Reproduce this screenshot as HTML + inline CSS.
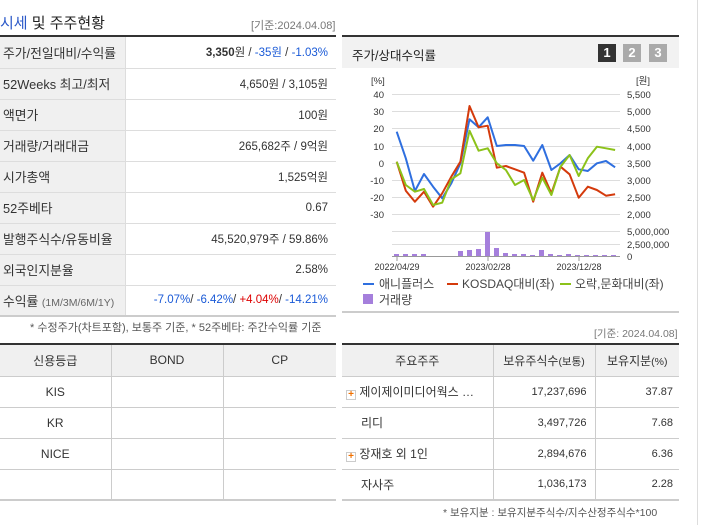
<!DOCTYPE html>
<html><head><meta charset="utf-8"><style>
*{margin:0;padding:0;box-sizing:border-box}
body{width:702px;height:525px;background:#fff;font-family:"Liberation Sans","Noto Sans CJK KR",sans-serif;font-size:12px;color:#333;position:relative;overflow:hidden}
.a{position:absolute}
table{border-collapse:collapse;position:absolute}
td{height:31px;border-bottom:1px solid #ddd;font-size:12px}
.lt td.l{background:#f0f0f0;width:125px;padding-left:3px;border-right:1px solid #ddd;font-size:12.8px}
.lt td.r{text-align:right;padding-right:8px;font-size:11.5px}
.b{color:#1a5ad7}.rd{color:#d00}
.ct td,.ct th{border-bottom:1px solid #ccc;border-right:1px solid #ccc;text-align:center;font-weight:normal;font-size:12px;height:31px}
.ct th{background:#f0f0f0}
.ct td:last-child,.ct th:last-child{border-right:none}
</style></head><body>
<div class="a" style="left:0;top:12px;font-size:15px;color:#222"><span style="color:#2a58c8">시세</span> 및 주주현황</div>
<div class="a" style="left:251px;top:17px;font-size:11px;color:#777">[기준:2024.04.08]</div>
<div class="a" style="left:0;top:35px;width:336px;height:2px;background:#333"></div>
<table class="lt" style="left:0;top:37px;width:336px">
<tr><td class="l">주가/전일대비/수익률</td><td class="r"><b>3,350</b>원 / <span class="b">-35원</span> / <span class="b">-1.03%</span></td></tr>
<tr><td class="l">52Weeks 최고/최저</td><td class="r">4,650원 / 3,105원</td></tr>
<tr><td class="l">액면가</td><td class="r">100원</td></tr>
<tr><td class="l">거래량/거래대금</td><td class="r">265,682주 / 9억원</td></tr>
<tr><td class="l">시가총액</td><td class="r">1,525억원</td></tr>
<tr><td class="l">52주베타</td><td class="r">0.67</td></tr>
<tr><td class="l">발행주식수/유동비율</td><td class="r">45,520,979주 / 59.86%</td></tr>
<tr><td class="l">외국인지분율</td><td class="r">2.58%</td></tr>
<tr><td class="l" style="border-bottom:2px solid #ccc">수익률 <span style="font-size:10.5px;color:#666">(1M/3M/6M/1Y)</span></td><td class="r" style="border-bottom:2px solid #ccc"><span class="b">-7.07%</span>/ <span class="b">-6.42%</span>/ <span class="rd">+4.04%</span>/ <span class="b">-14.21%</span></td></tr>
</table>
<div class="a" style="left:30px;top:319px;font-size:11px;color:#555">* 수정주가(차트포함), 보통주 기준, * 52주베타: 주간수익률 기준</div>

<div class="a" style="left:342px;top:35px;width:337px;height:2px;background:#333"></div>
<div class="a" style="left:342px;top:37px;width:337px;height:31px;background:#f2f2f2"></div>
<div class="a" style="left:352px;top:45px;font-size:12.5px;color:#222">주가/상대수익률</div>
<div class="a" style="left:598px;top:44px;width:18px;height:18px;background:#333;color:#fff;font-weight:bold;text-align:center;line-height:18px;font-size:13px">1</div>
<div class="a" style="left:623px;top:44px;width:18px;height:18px;background:#aaa;color:#fff;font-weight:bold;text-align:center;line-height:18px;font-size:13px">2</div>
<div class="a" style="left:649px;top:44px;width:18px;height:18px;background:#aaa;color:#fff;font-weight:bold;text-align:center;line-height:18px;font-size:13px">3</div>
<div class="a" style="left:697px;top:0;width:1px;height:525px;background:#ddd"></div>

<svg class="a" style="left:342px;top:68px" width="340" height="245" viewBox="342 68 340 245" font-family="Liberation Sans, sans-serif" font-size="9.5" fill="#333">
<g stroke="#ddd" stroke-width="1">
<line x1="392" x2="620" y1="94.5" y2="94.5"/><line x1="392" x2="620" y1="111.5" y2="111.5"/><line x1="392" x2="620" y1="128.5" y2="128.5"/><line x1="392" x2="620" y1="146.5" y2="146.5"/><line x1="392" x2="620" y1="163.5" y2="163.5"/><line x1="392" x2="620" y1="180.5" y2="180.5"/><line x1="392" x2="620" y1="197.5" y2="197.5"/><line x1="392" x2="620" y1="214.5" y2="214.5"/>
<line x1="392" x2="620" y1="231.5" y2="231.5"/><line x1="392" x2="620" y1="244.5" y2="244.5"/>
</g>
<line x1="392" x2="620" y1="256.5" y2="256.5" stroke="#999"/>
<g stroke="#999"><line x1="397" x2="397" y1="256" y2="261"/><line x1="488" x2="488" y1="256" y2="261"/><line x1="579" x2="579" y1="256" y2="261"/></g>
<text x="371" y="84">[%]</text><text x="636" y="84">[원]</text>
<g text-anchor="end"><text x="384" y="98">40</text><text x="384" y="115">30</text><text x="384" y="132">20</text><text x="384" y="150">10</text><text x="384" y="167">0</text><text x="384" y="184">-10</text><text x="384" y="201">-20</text><text x="384" y="218">-30</text></g>
<g><text x="627" y="98">5,500</text><text x="627" y="115">5,000</text><text x="627" y="132">4,500</text><text x="627" y="150">4,000</text><text x="627" y="167">3,500</text><text x="627" y="184">3,000</text><text x="627" y="201">2,500</text><text x="627" y="218">2,000</text><text x="627" y="235">5,000,000</text><text x="627" y="248">2,500,000</text><text x="627" y="260">0</text></g>
<g text-anchor="middle" font-size="9"><text x="397" y="270">2022/04/29</text><text x="488" y="270">2023/02/28</text><text x="579" y="270">2023/12/28</text></g>
<g fill="#a57fdc">
<rect x="394" y="254" width="5" height="2"/><rect x="403" y="254" width="5" height="2"/><rect x="412" y="254" width="5" height="2"/><rect x="421" y="254" width="5" height="2"/>
<rect x="458" y="251" width="5" height="5"/><rect x="467" y="250" width="5" height="6"/><rect x="476" y="249" width="5" height="7"/><rect x="485" y="232" width="5" height="24"/><rect x="494" y="248" width="5" height="8"/><rect x="503" y="253" width="5" height="3"/><rect x="512" y="254" width="5" height="2"/><rect x="521" y="254" width="5" height="2"/><rect x="530" y="255" width="5" height="1"/><rect x="539" y="250" width="5" height="6"/><rect x="548" y="254" width="5" height="2"/><rect x="557" y="255" width="5" height="1"/><rect x="566" y="254" width="5" height="2"/><rect x="575" y="255" width="5" height="1"/><rect x="584" y="255" width="5" height="1"/><rect x="593" y="255" width="5" height="1"/><rect x="602" y="255" width="5" height="1"/><rect x="611" y="255" width="5" height="1"/>
</g>
<g fill="none" stroke-width="2" stroke-linejoin="round">
<polyline stroke="#2f6fdf" points="396.7,131.7 405.8,158.3 414.9,191 424,174 433.1,186.7 442.2,198.3 451.3,183.3 460.4,163.3 469.5,119.3 478.6,127.3 487.7,117.3 496.8,146 505.9,145 515,145 524.1,146 533.2,160.7 542.3,145 551.4,170 560.5,163.3 569.6,155 578.7,169.3 587.8,171 596.9,163.3 606,161 615.1,167.3"/>
<polyline stroke="#d43a0c" points="396.7,161.7 405.8,190.7 414.9,201.7 424,191.7 433.1,206.7 442.2,193.3 451.3,176.7 460.4,161.7 469.5,106 478.6,127.3 487.7,125.7 496.8,167.7 505.9,166 515,169.3 524.1,172.7 533.2,201.7 542.3,172.7 551.4,193.3 560.5,166.7 569.6,174.3 578.7,197.7 587.8,186.7 596.9,190 606,195.7 615.1,194.3"/>
<polyline stroke="#8cc21a" points="396.7,161.7 405.8,185 414.9,191.7 424,189 433.1,205 442.2,202.7 451.3,179.3 460.4,173.3 469.5,130.7 478.6,150.7 487.7,148.3 496.8,163.3 505.9,170 515,185 524.1,180 533.2,200 542.3,177.7 551.4,195 560.5,166.7 569.6,155 578.7,176 587.8,158.3 596.9,146.7 606,148.3 615.1,150"/>
</g>
<g font-size="12" fill="#444">
<rect x="363" y="283" width="11" height="2" fill="#2f6fdf"/><text x="379" y="288">애니플러스</text>
<rect x="447" y="283" width="11" height="2" fill="#d43a0c"/><text x="462" y="288">KOSDAQ대비(좌)</text>
<rect x="560" y="283" width="11" height="2" fill="#8cc21a"/><text x="575" y="288">오락,문화대비(좌)</text>
<rect x="363" y="294" width="10" height="10" fill="#a57fdc"/><text x="379" y="304">거래량</text>
</g>
</svg>
<div class="a" style="left:342px;top:311px;width:337px;height:2px;background:#ccc"></div>
<div class="a" style="left:594px;top:326px;font-size:10.5px;color:#777">[기준: 2024.04.08]</div>

<div class="a" style="left:0;top:343px;width:336px;height:2px;background:#333"></div>
<table class="ct" style="left:0;top:345px;width:336px">
<tr><th style="width:111px">신용등급</th><th style="width:112px">BOND</th><th>CP</th></tr>
<tr><td>KIS</td><td></td><td></td></tr>
<tr><td>KR</td><td></td><td></td></tr>
<tr><td>NICE</td><td></td><td></td></tr>
<tr><td style="border-bottom:2px solid #ccc"></td><td style="border-bottom:2px solid #ccc"></td><td style="border-bottom:2px solid #ccc"></td></tr>
</table>
<div class="a" style="left:342px;top:343px;width:337px;height:2px;background:#333"></div>
<table class="ct" style="left:342px;top:345px;width:337px">
<tr><th style="width:151px">주요주주</th><th style="width:102px">보유주식수<span style="font-size:10.5px">(보통)</span></th><th>보유지분<span style="font-size:10.5px">(%)</span></th></tr>
<tr><td style="text-align:left;padding-left:4px"><span style="display:inline-block;width:10px;height:10px;border:1px solid #ccc;background:#fff;color:#f07000;font-size:10px;line-height:8px;text-align:center;font-weight:bold;vertical-align:-1px">+</span> 제이제이미디어웍스 …</td><td style="text-align:right;padding-right:8px;font-size:11px">17,237,696</td><td style="text-align:right;padding-right:6px;font-size:11px">37.87</td></tr>
<tr><td style="text-align:left;padding-left:19px">리디</td><td style="text-align:right;padding-right:8px;font-size:11px">3,497,726</td><td style="text-align:right;padding-right:6px;font-size:11px">7.68</td></tr>
<tr><td style="text-align:left;padding-left:4px"><span style="display:inline-block;width:10px;height:10px;border:1px solid #ccc;background:#fff;color:#f07000;font-size:10px;line-height:8px;text-align:center;font-weight:bold;vertical-align:-1px">+</span> 장재호 외 1인</td><td style="text-align:right;padding-right:8px;font-size:11px">2,894,676</td><td style="text-align:right;padding-right:6px;font-size:11px">6.36</td></tr>
<tr><td style="text-align:left;padding-left:19px;border-bottom:2px solid #ccc">자사주</td><td style="text-align:right;padding-right:8px;font-size:11px;border-bottom:2px solid #ccc">1,036,173</td><td style="text-align:right;padding-right:6px;font-size:11px;border-bottom:2px solid #ccc">2.28</td></tr>
</table>
<div class="a" style="left:443px;top:505px;font-size:10.5px;color:#555">* 보유지분 : 보유지분주식수/지수산정주식수*100</div>
</body></html>
